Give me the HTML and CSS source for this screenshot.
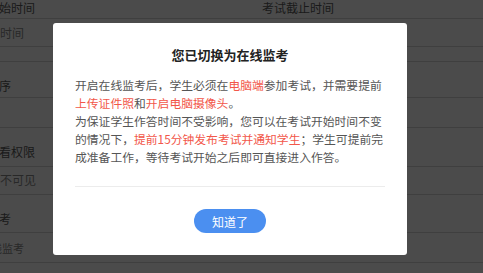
FILE: index.html
```html
<!DOCTYPE html>
<html lang="zh-CN">
  <head>
    <meta charset="UTF-8" />
    <meta name="viewport" content="width=device-width, initial-scale=1.0" />
    <title>在线监考</title>
    <link rel="stylesheet" href="styles.css">
  </head>
  <body>
    <!-- 背后的考试设置表单 -->
    <div class="page">
      <div class="row r-head">
        <span class="label">开始时间</span>
        <span class="label">考试截止时间</span>
      </div>
      <div class="row r-time"><span class="ph">选择时间</span></div>
      <div class="row r-gap"></div>
      <div class="row r-order"><span class="label">排序</span></div>
      <div class="row r-empty"></div>
      <div class="row r-auth"><span class="label">查看权限</span></div>
      <div class="row r-auth-val"><span class="ph">学生不可见</span></div>
      <div class="row r-mode"><span class="label">监考</span></div>
      <div class="row r-mode-val"><span class="ph small">在线监考</span></div>
    </div>

    <div class="mask"></div>

    <!-- 提示弹窗 -->
    <div class="dialog">
      <h3 class="dialog-title">您已切换为在线监考</h3>
      <div class="dialog-body">
        <p>开启在线监考后，学生必须在<em>电脑端</em>参加考试，并需要提前<em>上传证件照</em>和<em>开启电脑摄像头</em>。</p>
        <p>为保证学生作答时间不受影响，您可以在考试开始时间不变的情况下，<em>提前15分钟发布考试并通知学生</em>；学生可提前完成准备工作，等待考试开始之后即可直接进入作答。</p>
      </div>
      <div class="dialog-line"></div>
      <div class="dialog-foot">
        <button class="btn-ok">知道了</button>
      </div>
    </div>
  </body>
</html>
```

FILE: styles.css
```css
html, body {
  margin: 0;
  padding: 0;
}

body {
  width: 483px;
  height: 273px;
  overflow: hidden;
  background: #fff;
  font-family: "Noto Sans CJK SC", "Noto Sans", sans-serif;
}

/* 背景表单 */
.page {
  margin-left: -13px;
}

.row {
  box-sizing: border-box;
  display: flex;
  align-items: flex-end;
  border-bottom: 1px solid #d6d6d6;
  font-size: 12px;
  line-height: 16px;
}

.label {
  color: #5a5a5a;
}

.ph {
  margin-left: -11px;
  color: #8a8a8a;
}

.ph.small {
  margin-left: -7px;
  font-size: 11px;
}

.r-head {
  height: 19px;
  padding-bottom: 2px;
}
.r-head .label:first-child {
  width: 275px;
}

.r-time {
  height: 28px;
  padding-bottom: 5px;
}

.r-gap {
  height: 15px;
}

.r-order {
  height: 36px;
  padding-bottom: 3px;
}

.r-empty {
  height: 30px;
}

.r-auth {
  height: 39px;
  padding-bottom: 6px;
}

.r-auth-val {
  height: 28px;
  padding-bottom: 6px;
}

.r-mode {
  height: 38px;
  padding-bottom: 5px;
}

.r-mode-val {
  height: 30px;
  padding-bottom: 6px;
}

/* 遮罩 */
.mask {
  position: absolute;
  left: 0;
  top: 0;
  right: 0;
  bottom: 0;
  background: rgba(0, 0, 0, 0.705);
}

/* 弹窗 */
.dialog {
  position: absolute;
  left: 53px;
  top: 23px;
  width: 354px;
  height: 232px;
  box-sizing: border-box;
  padding: 23px 22px 22px;
  background: #fff;
  border-radius: 3px;
}

.dialog-title {
  margin: 0;
  text-align: center;
  font-size: 13px;
  line-height: 18px;
  font-weight: bold;
  color: #222;
}

.dialog-body {
  margin-top: 12px;
  font-size: 11.8px;
  line-height: 18px;
  color: #555;
}

.dialog-body p {
  margin: 0;
}

.dialog-body em {
  font-style: normal;
  color: #f2574a;
}

.dialog-line {
  margin-top: 20px;
  height: 1px;
  background: #ececec;
}

.dialog-foot {
  margin-top: 22px;
  display: flex;
  justify-content: center;
}

.btn-ok {
  width: 72px;
  height: 24px;
  padding: 0;
  border: none;
  border-radius: 12px;
  background: #4b8ff0;
  color: #fff;
  font-family: inherit;
  font-size: 12px;
  cursor: pointer;
}
```
